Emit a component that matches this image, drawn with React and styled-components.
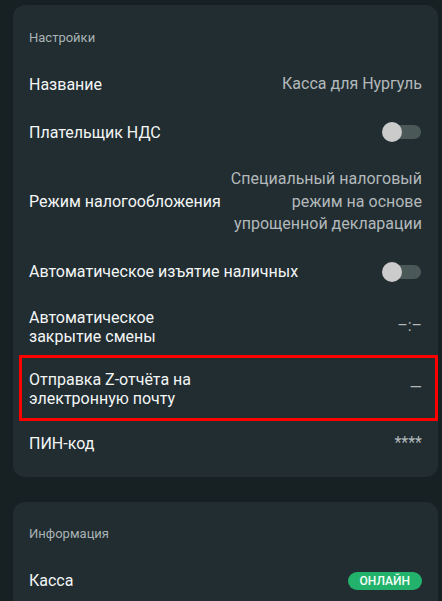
import React from 'react';
import styled, { createGlobalStyle } from 'styled-components';

const GlobalStyle = createGlobalStyle`
    html, body {
        margin: 0;
        padding: 0;
        background: #172022;
        font-family: Roboto, "Noto Sans", "Liberation Sans", sans-serif;
        -webkit-font-smoothing: antialiased;
    }
`

const Page = styled.div`
    padding: 5px 4px 0 13px;
    height: 596px;
    overflow: hidden;
`

const Card = styled.div`
    background: #212d31;
    border-radius: 12px;
    padding: 9px 16px 9px 16px;
    margin-bottom: 25px;
`

const CardTitle = styled.div`
    height: 46px;
    display: flex;
    align-items: center;
    font-size: 13px;
    color: #a9b2b4;
`

const Row = styled.div`
    position: relative;
    display: flex;
    align-items: center;
    justify-content: space-between;
    gap: 10px;
    min-height: 48px;
    padding: ${p => (p.tall ? '12px 0' : '0')};
    box-sizing: border-box;

    ${p => p.highlight && `
        &::after {
            content: '';
            position: absolute;
            left: -10px;
            right: -16px;
            top: -3px;
            bottom: -1px;
            border: 3px solid #ff0000;
            pointer-events: none;
        }
    `}
`

const Label = styled.div`
    flex-shrink: 0;
    font-size: 16px;
    line-height: 19px;
    color: #f4f6f6;
    max-width: ${p => (p.narrow ? '180px' : 'none')};
`

const Value = styled.div`
    font-size: 16px;
    line-height: 22.5px;
    color: #b3b9bb;
    text-align: right;
    max-width: 194px;
`

const Toggle = styled.div`
    position: relative;
    width: 38px;
    height: 14px;
    margin-right: 1px;
    border-radius: 7px;
    background: #4a5957;

    &::before {
        content: '';
        position: absolute;
        left: -1px;
        top: -3px;
        width: 20px;
        height: 20px;
        border-radius: 50%;
        background: #cbcbcb;
    }
`

const Badge = styled.div`
    height: 18px;
    padding: 0 12px;
    border-radius: 9px;
    background: #23b26b;
    color: #f4fff8;
    font-size: 12px;
    font-weight: 500;
    line-height: 18px;
`

const App = () => {
    return (
        <Page>
            <GlobalStyle />
            <Card>
                <CardTitle>Настройки</CardTitle>
                <Row>
                    <Label>Название</Label>
                    <Value>Касса для Нургуль</Value>
                </Row>
                <Row>
                    <Label>Плательщик НДС</Label>
                    <Toggle />
                </Row>
                <Row tall>
                    <Label>Режим налогообложения</Label>
                    <Value>Специальный налоговый режим на основе упрощенной декларации</Value>
                </Row>
                <Row>
                    <Label>Автоматическое изъятие наличных</Label>
                    <Toggle />
                </Row>
                <Row tall>
                    <Label narrow>Автоматическое закрытие смены</Label>
                    <Value>–:–</Value>
                </Row>
                <Row tall highlight>
                    <Label narrow>Отправка Z-отчёта на электронную почту</Label>
                    <Value>—</Value>
                </Row>
                <Row>
                    <Label>ПИН-код</Label>
                    <Value>****</Value>
                </Row>
            </Card>
            <Card>
                <CardTitle>Информация</CardTitle>
                <Row>
                    <Label>Касса</Label>
                    <Badge>ОНЛАЙН</Badge>
                </Row>
            </Card>
        </Page>
    );
}

export default App;
